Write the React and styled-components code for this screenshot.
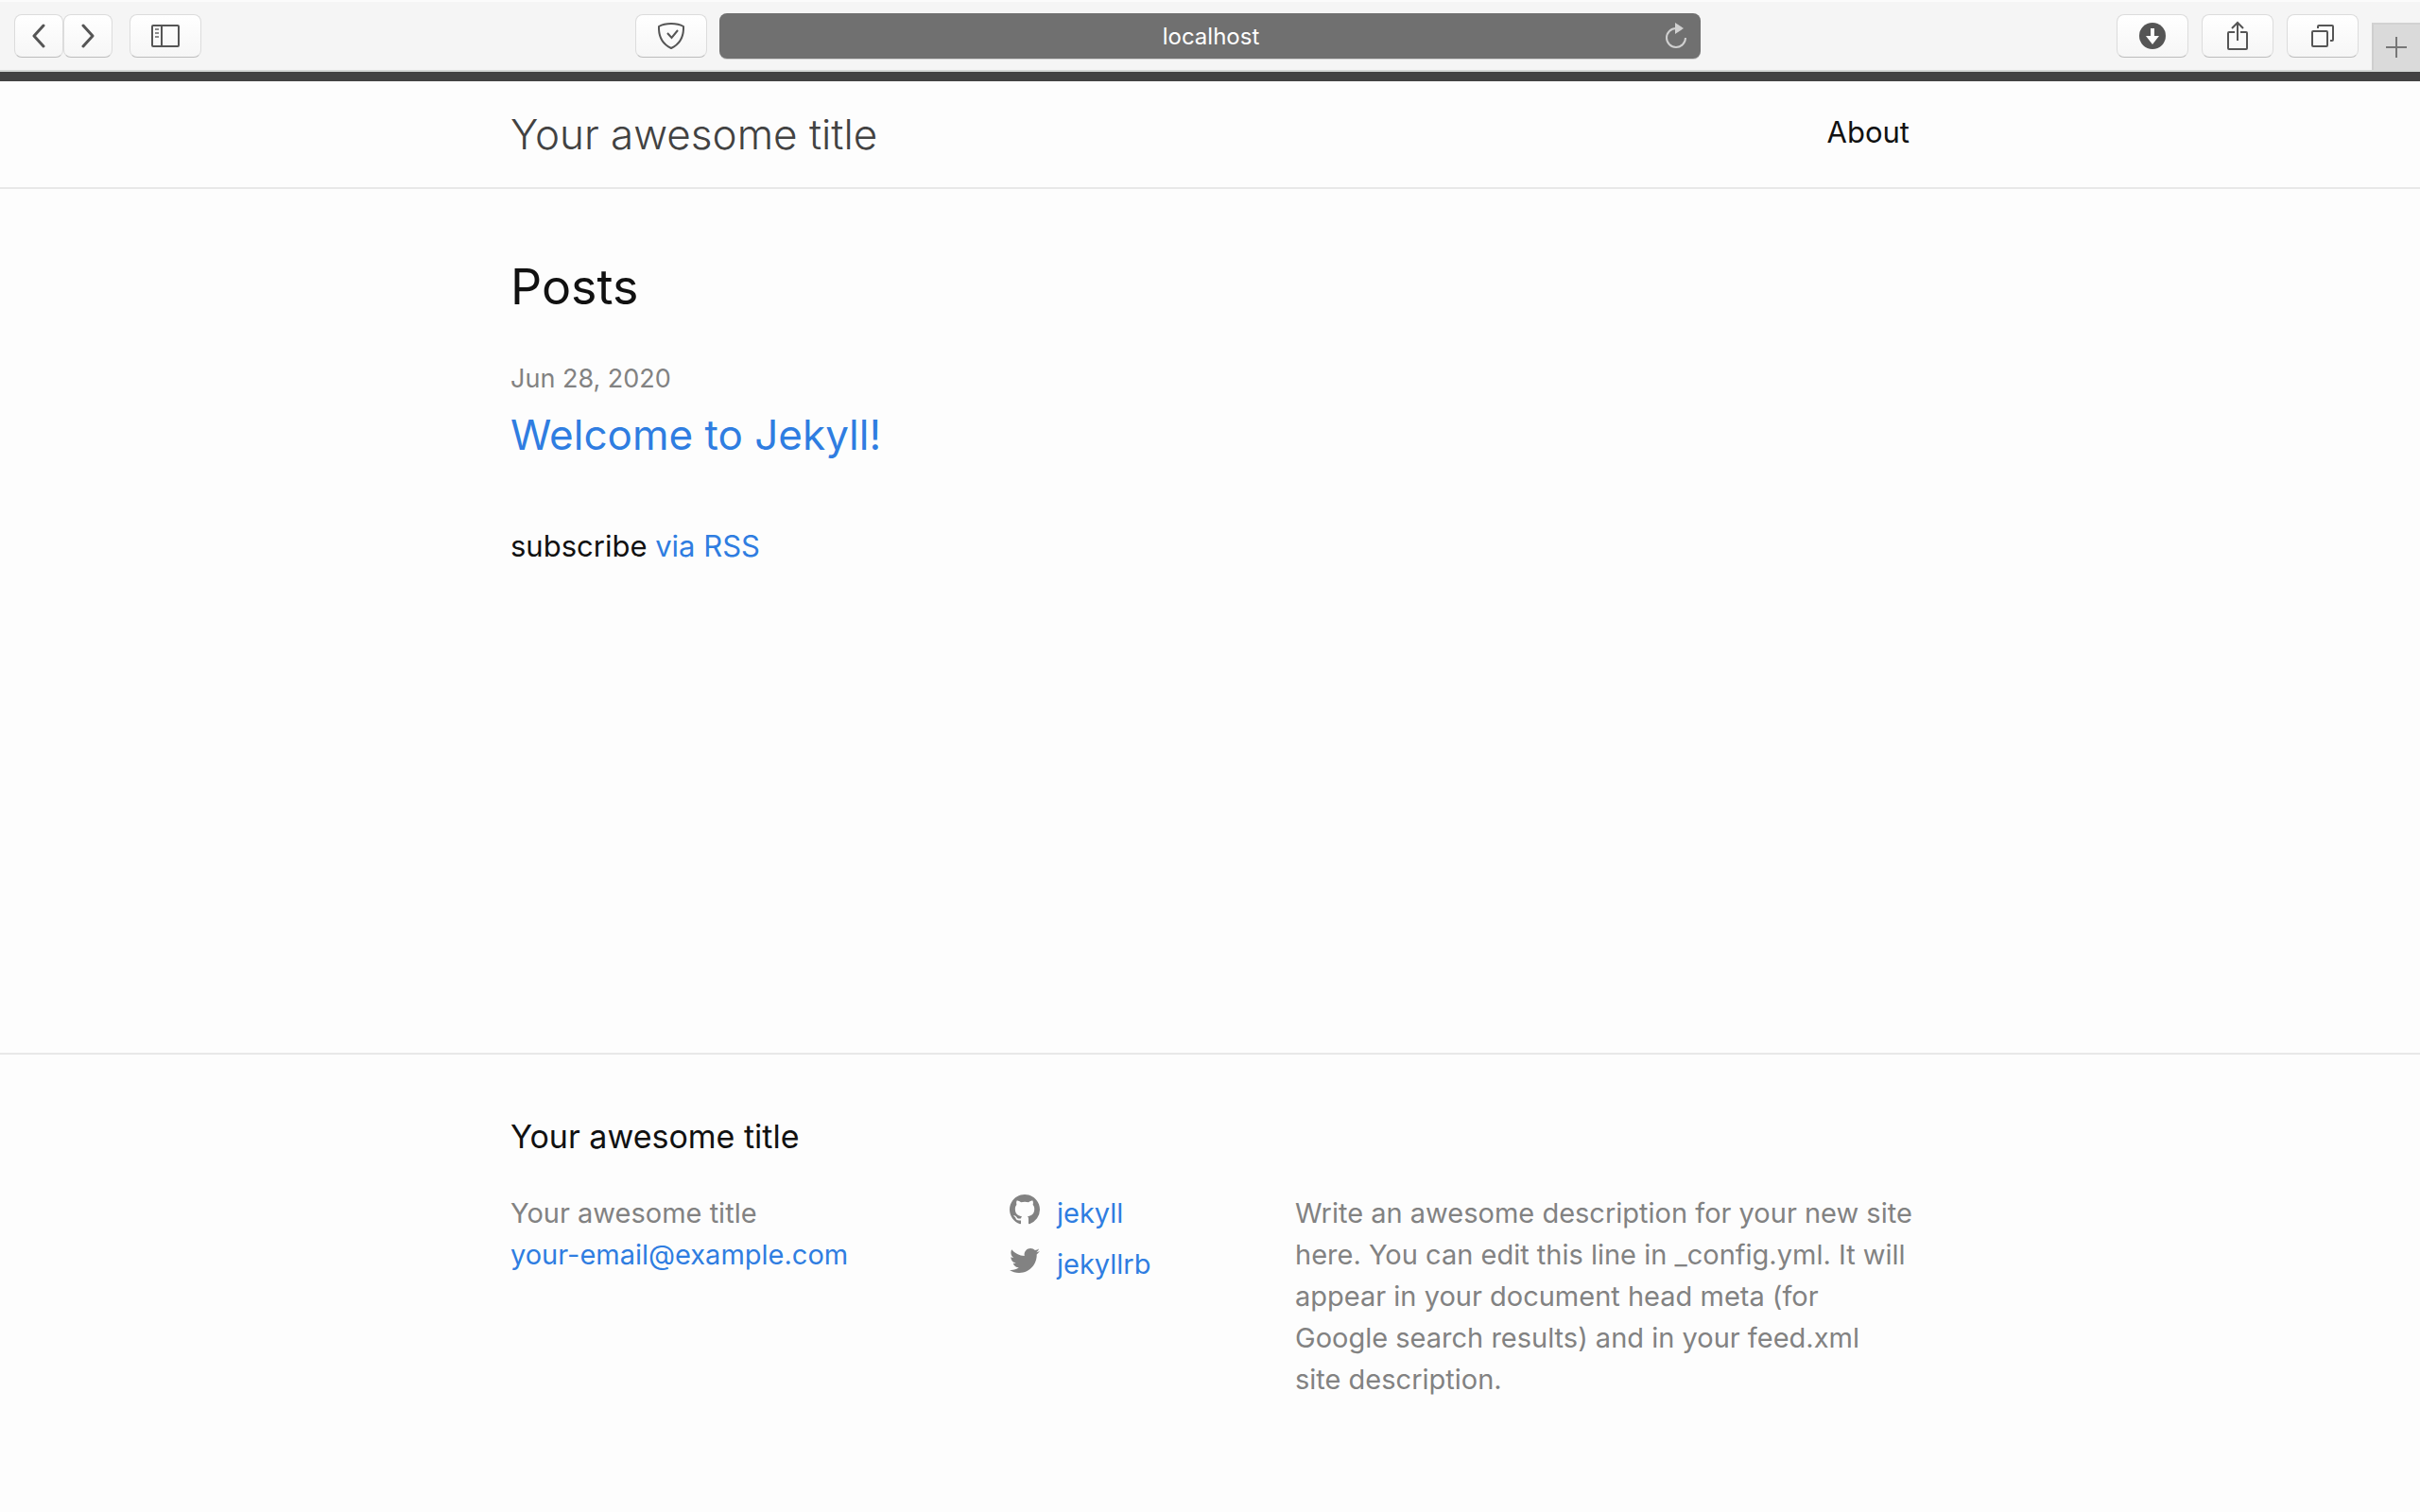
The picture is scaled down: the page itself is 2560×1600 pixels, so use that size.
import React from 'react';
import styled, { createGlobalStyle } from 'styled-components';

const GlobalStyle = createGlobalStyle`
  * {
    box-sizing: border-box;
  }

  body {
    margin: 0;
    background-color: #fdfdfd;
    color: #111;
    font-family: Inter, "Liberation Sans", sans-serif;
    font-size: 31px;
    line-height: 48px;
  }

  h1, h2, p, ul {
    margin: 0;
    padding: 0;
    font-weight: 400;
  }

  ul {
    list-style: none;
  }
`;

const Page = styled.div`
  display: flex;
  flex-direction: column;
  min-height: 100vh;
`;

// browser toolbar
const Toolbar = styled.div`
  display: grid;
  grid-template-columns: 761fr 1038fr 761fr;
  height: 76px;
  background-color: #f5f5f5;
  border-top: 2px solid #fbfbfb;
  border-bottom: 2px solid #d4d7d5;
`;

const ToolGroup = styled.div`
  display: flex;
  align-items: center;
  padding-left: 15px;
  padding-right: 13px;
`;

const RightTools = styled(ToolGroup)`
  justify-content: flex-end;
  gap: 14px;
  padding: 0;
`;

const ToolButton = styled.button`
  display: flex;
  align-items: center;
  justify-content: center;
  width: ${props => (props.$narrow ? '52px' : '76px')};
  height: 46px;
  margin-left: ${props => props.$push || '0'};
  padding: 0;
  border: 1px solid #dcdcdc;
  border-bottom-color: #bcbcbc;
  border-radius: 8px;
  background: linear-gradient(#ffffff, #f6f6f6);
  color: #555;
`;

const NewTab = styled.button`
  display: flex;
  align-items: center;
  justify-content: center;
  align-self: flex-end;
  width: 51px;
  height: 50px;
  padding: 0 2px 0 0;
  border: 0;
  border-left: 2px solid #cfcfcf;
  border-top: 2px solid #d2d2d2;
  background-color: #dadada;
  color: #777;
`;

const AddressBar = styled.div`
  display: flex;
  align-items: center;
  align-self: center;
  height: 48px;
  padding-left: 54px;
  border-radius: 8px;
  background-color: #707070;
  box-shadow: 0 1px 0 #cfcfcf;
`;

const Address = styled.input`
  flex: 1;
  min-width: 0;
  padding: 0;
  border: 0;
  outline: 0;
  background: transparent;
  color: #fff;
  font: 400 24px Inter, "Liberation Sans", sans-serif;
  text-align: center;
`;

const Reload = styled.button`
  display: flex;
  align-items: center;
  justify-content: center;
  width: 52px;
  height: 48px;
  padding: 0;
  border: 0;
  background: transparent;
  color: #d0d0d0;
`;

// site
const Wrapper = styled.div`
  width: 100%;
  max-width: 1600px;
  margin: 0 auto;
  padding: 0 60px;
`;

const Header = styled.header`
  border-top: 10px solid #424242;
  border-bottom: 2px solid #e8e8e8;
`;

const HeaderRow = styled(Wrapper)`
  display: flex;
  align-items: center;
  justify-content: space-between;
  height: 112px;
`;

const SiteTitle = styled.a`
  color: #424242;
  font-size: 44px;
  font-weight: 300;
  text-decoration: none;
`;

const Nav = styled.nav`
  padding-bottom: 4px;
`;

const NavLink = styled.a`
  color: #111;
  text-decoration: none;
`;

const Main = styled.main`
  flex: 1;
  padding: 62px 0 60px;
`;

const ListHeading = styled.h2`
  margin-bottom: 30px;
  font-size: 52px;
  line-height: 84px;
`;

const PostDate = styled.time`
  display: block;
  color: #828282;
  font-size: 27px;
  line-height: 50px;
`;

const PostTitle = styled.h2`
  margin-bottom: 60px;
  font-size: 44px;
  line-height: 68px;
`;

const Link = styled.a`
  color: #2f7de1;
  text-decoration: none;
`;

const Footer = styled.footer`
  padding: 60px 0;
  border-top: 2px solid #e8e8e8;
`;

const FooterHeading = styled.h2`
  margin-bottom: 32px;
  font-size: 34px;
  line-height: 54px;
`;

const FooterColumns = styled.div`
  display: grid;
  grid-template-columns: 528fr 302fr 650fr;
  padding-bottom: 58px;
  color: #828282;
  font-size: 29px;
  line-height: 44px;
`;

const Contact = styled.ul`
  display: flex;
  flex-direction: column;
`;

const Social = styled.ul`
  display: flex;
  flex-direction: column;
  gap: 10px;
`;

const SocialLink = styled(Link)`
  display: flex;
  gap: 18px;
`;

const SocialIcon = styled.svg`
  width: 32px;
  height: 32px;
  margin-top: 2px;
  fill: #828282;
`;

const Description = styled.p`
  margin-right: -6px;
`;

const Icon = ({ w, h, children }) => (
  <svg
    width={w}
    height={h}
    viewBox={`0 0 ${w} ${h}`}
    fill="none"
    stroke="currentColor"
    strokeWidth="2"
    aria-hidden="true"
  >
    {children}
  </svg>
);

const BrowserBar = () => (
  <Toolbar>
    <ToolGroup>
      <ToolButton $narrow aria-label="Back">
        <Icon w={16} h={26}>
          <path d="M13 2 3 13l10 11" strokeWidth="3" strokeLinecap="round" strokeLinejoin="round" />
        </Icon>
      </ToolButton>
      <ToolButton $narrow aria-label="Forward">
        <Icon w={16} h={26}>
          <path d="M3 2l10 11L3 24" strokeWidth="3" strokeLinecap="round" strokeLinejoin="round" />
        </Icon>
      </ToolButton>
      <ToolButton $push="18px" aria-label="Show sidebar">
        <Icon w={30} h={24}>
          <rect x="1" y="1" width="28" height="22" rx="1" />
          <path d="M11 1v22" />
          <path d="M4 5h4M4 9h4M4 13h4" stroke="#8c8c8c" />
        </Icon>
      </ToolButton>
      <ToolButton $push="auto" aria-label="Privacy shield">
        <Icon w={28} h={28}>
          <path d="M14 1C9 1 4.500 2 1 4c-.4 10 3.500 18.500 13 23 9.500-4.500 13.400-13 13-23C23.500 2 19 1 14 1z" />
          <path d="M10 11l4.500 5 6.500-8" />
        </Icon>
      </ToolButton>
    </ToolGroup>
    <AddressBar>
      <Address aria-label="Address" defaultValue="localhost" />
      <Reload aria-label="Reload">
        <Icon w={24} h={28}>
          <path d="M12 6a10 10 0 1 0 10 10" />
          <path d="M11 0v12l9-6z" fill="currentColor" stroke="none" />
        </Icon>
      </Reload>
    </AddressBar>
    <RightTools>
      <ToolButton aria-label="Downloads">
        <Icon w={28} h={28}>
          <circle cx="14" cy="14" r="14" fill="currentColor" stroke="none" />
          <path d="M12 6h4v8h5l-7 9-7-9h5z" fill="#fff" stroke="none" />
        </Icon>
      </ToolButton>
      <ToolButton aria-label="Share">
        <Icon w={22} h={32}>
          <path d="M8 12H2q-1 0-1 1v16q0 1 1 1h18q1 0 1-1V13q0-1-1-1h-6" />
          <path d="M11 21V2M5 8l6-6 6 6" />
        </Icon>
      </ToolButton>
      <ToolButton aria-label="Show tabs">
        <Icon w={24} h={24}>
          <rect x="1" y="7" width="16" height="16" rx="1" />
          <path d="M7 4V2q0-1 1-1h14q1 0 1 1v14q0 1-1 1h-2" />
        </Icon>
      </ToolButton>
      <NewTab aria-label="New tab">
        <Icon w={22} h={22}>
          <path d="M11 0v22M0 11h22" />
        </Icon>
      </NewTab>
    </RightTools>
  </Toolbar>
);

const App = () => (
  <Page>
    <GlobalStyle />
    <BrowserBar />
    <Header>
      <HeaderRow>
        <SiteTitle href="#">Your awesome title</SiteTitle>
        <Nav>
          <NavLink href="#about">About</NavLink>
        </Nav>
      </HeaderRow>
    </Header>
    <Main>
      <Wrapper>
        <ListHeading>Posts</ListHeading>
        <PostDate dateTime="2020-06-28">Jun 28, 2020</PostDate>
        <PostTitle>
          <Link href="#welcome">Welcome to Jekyll!</Link>
        </PostTitle>
        <p>
          subscribe <Link href="#feed">via RSS</Link>
        </p>
      </Wrapper>
    </Main>
    <Footer>
      <Wrapper>
        <FooterHeading>Your awesome title</FooterHeading>
        <FooterColumns>
          <Contact>
            <li>Your awesome title</li>
            <li>
              <Link href="mailto:your-email@example.com">your-email@example.com</Link>
            </li>
          </Contact>
          <Social>
            <li>
              <SocialLink href="#github">
                <SocialIcon viewBox="0 0 16 16" aria-hidden="true">
                  <path d="M8 0C3.58 0 0 3.58 0 8c0 3.54 2.29 6.53 5.47 7.59.4.07.55-.17.55-.38 0-.19-.01-.82-.01-1.49-2.01.37-2.53-.49-2.69-.94-.09-.23-.48-.94-.82-1.13-.28-.15-.68-.52-.01-.53.63-.01 1.08.58 1.23.82.72 1.21 1.87.87 2.33.66.07-.52.28-.87.51-1.07-1.78-.2-3.64-.89-3.64-3.95 0-.87.31-1.59.82-2.15-.08-.2-.36-1.02.08-2.12 0 0 .67-.21 2.2.82.64-.18 1.32-.27 2-.27.68 0 1.36.09 2 .27 1.53-1.04 2.2-.82 2.2-.82.44 1.1.16 1.92.08 2.12.51.56.82 1.27.82 2.15 0 3.07-1.87 3.75-3.65 3.95.29.25.54.73.54 1.48 0 1.07-.01 1.93-.01 2.2 0 .21.15.46.55.38A8.013 8.013 0 0 0 16 8c0-4.420-3.580-8-8-8z" />
                </SocialIcon>
                jekyll
              </SocialLink>
            </li>
            <li>
              <SocialLink href="#twitter">
                <SocialIcon viewBox="0 0 16 16" aria-hidden="true">
                  <path d="M15.969,3.058c-0.586,0.26-1.217,0.436-1.878,0.515c0.675-0.405,1.194-1.045,1.438-1.809c-0.632,0.375-1.332,0.647-2.076,0.793c-0.596-0.636-1.446-1.033-2.387-1.033c-1.806,0-3.27,1.464-3.27,3.27c0,0.256,0.029,0.506,0.085,0.745C5.163,5.404,2.753,4.102,1.14,2.124C0.859,2.607,0.698,3.168,0.698,3.767c0,1.134,0.577,2.135,1.455,2.722C1.616,6.472,1.112,6.325,0.671,6.08c0,0.014,0,0.027,0,0.041c0,1.584,1.127,2.906,2.623,3.206C3.02,9.402,2.731,9.442,2.433,9.442c-0.211,0-0.416-0.021-0.615-0.059c0.416,1.299,1.624,2.245,3.055,2.271c-1.119,0.877-2.529,1.4-4.061,1.4c-0.264,0-0.524-0.015-0.78-0.046c1.447,0.928,3.166,1.469,5.013,1.469c6.015,0,9.304-4.983,9.304-9.304c0-0.142-0.003-0.283-0.009-0.423C14.976,4.29,15.531,3.714,15.969,3.058z" />
                </SocialIcon>
                jekyllrb
              </SocialLink>
            </li>
          </Social>
          <Description>
            Write an awesome description for your new site here. You can edit this line in _config.yml. It will
            appear in your document head meta (for Google search results) and in your feed.xml
            <br />
            site description.
          </Description>
        </FooterColumns>
      </Wrapper>
    </Footer>
  </Page>
);

export default App;
